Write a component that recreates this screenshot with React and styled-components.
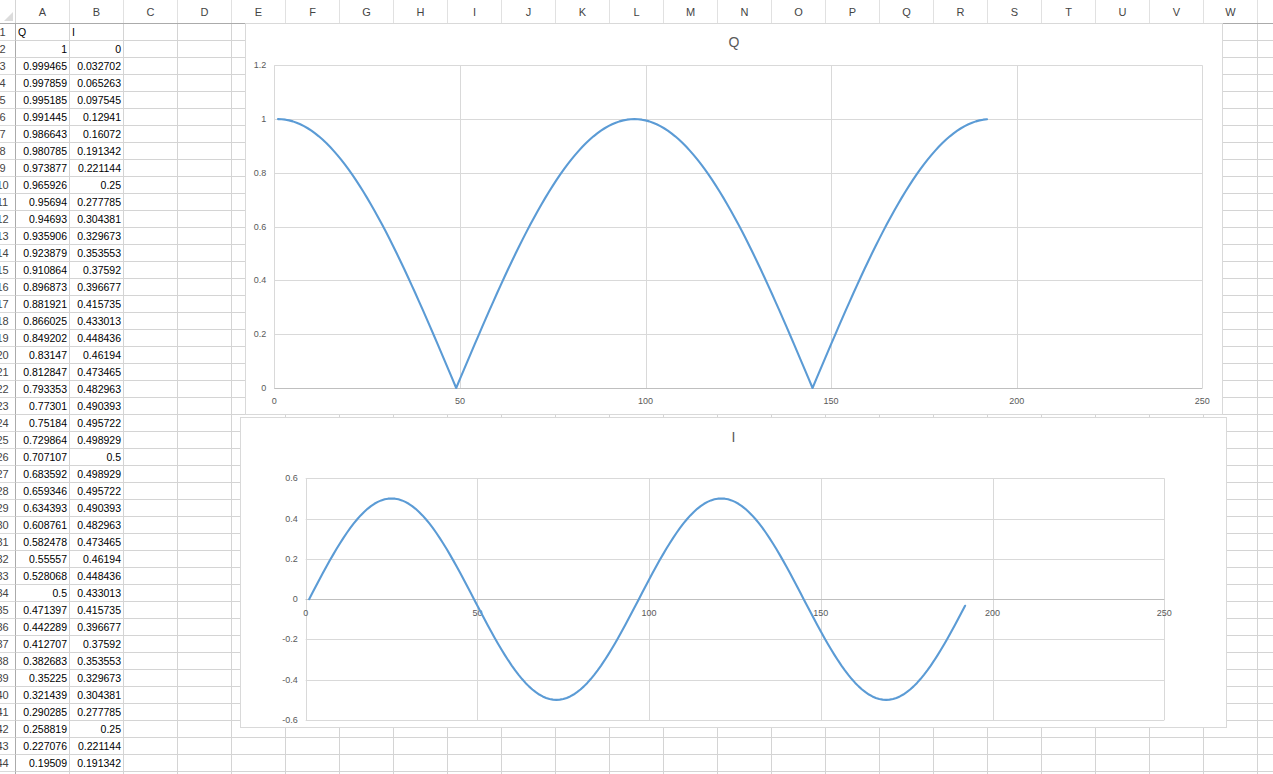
import React from "react";
import styled, { createGlobalStyle } from "styled-components";

const GlobalStyle = createGlobalStyle`
  html, body {
    margin: 0;
    padding: 0;
    background: #fff;
    overflow: hidden;
  }
  body {
    font-family: "Liberation Sans", Arial, sans-serif;
  }
`;

const COLS = "ABCDEFGHIJKLMNOPQRSTUVWX".split("");
const ROW_COUNT = 46;

// values as the sheet shows them (rows 2..44)
const Q_CELLS = [
  "1", "0.999465", "0.997859", "0.995185", "0.991445", "0.986643", "0.980785", "0.973877",
  "0.965926", "0.95694", "0.94693", "0.935906", "0.923879", "0.910864", "0.896873", "0.881921",
  "0.866025", "0.849202", "0.83147", "0.812847", "0.793353", "0.77301", "0.75184", "0.729864",
  "0.707107", "0.683592", "0.659346", "0.634393", "0.608761", "0.582478", "0.55557", "0.528068",
  "0.5", "0.471397", "0.442289", "0.412707", "0.382683", "0.35225", "0.321439", "0.290285",
  "0.258819", "0.227076", "0.19509",
];
const I_CELLS = [
  "0", "0.032702", "0.065263", "0.097545", "0.12941", "0.16072", "0.191342", "0.221144",
  "0.25", "0.277785", "0.304381", "0.329673", "0.353553", "0.37592", "0.396677", "0.415735",
  "0.433013", "0.448436", "0.46194", "0.473465", "0.482963", "0.490393", "0.495722", "0.498929",
  "0.5", "0.498929", "0.495722", "0.490393", "0.482963", "0.473465", "0.46194", "0.448436",
  "0.433013", "0.415735", "0.396677", "0.37592", "0.353553", "0.329673", "0.304381", "0.277785",
  "0.25", "0.221144", "0.191342",
];

// Q = |cos|, I = sin*cos, sampled at pi/96
const qAt = (n) => Math.abs(Math.cos((n * Math.PI) / 96));
const iAt = (n) => 0.5 * Math.sin((n * Math.PI) / 48);

const qSeries = Array.from({ length: 192 }, (_, n) => qAt(n));
const iSeries = Array.from({ length: 192 }, (_, n) => iAt(n));

const Sheet = styled.div`
  position: relative;
  width: 1273px;
  height: 774px;
  overflow: hidden;
  background: #fff;
`;

// the sheet is scrolled a few pixels to the right, cutting the row numbers
const Scroll = styled.div`
  margin-left: -10px;
  width: max-content;
`;

const HeaderRow = styled.div`
  display: flex;
  height: 24px;
  box-sizing: border-box;
  border-bottom: 1px solid #ababab;
`;

const Corner = styled.div`
  flex: none;
  width: 26px;
  box-sizing: border-box;
  border-right: 1px solid #d5d5d5;
  display: flex;
  align-items: flex-end;
  justify-content: flex-end;
  padding: 0 2px 2px 0;
`;

const CornerMark = styled.span`
  width: 0;
  height: 0;
  border-left: 9px solid transparent;
  border-bottom: 9px solid #dcdcdc;
`;

const ColHead = styled.div`
  flex: none;
  width: 54px;
  box-sizing: border-box;
  border-right: 1px solid #e1e1e1;
  text-align: center;
  font-size: 11px;
  line-height: 24px;
  color: #444;
`;

const Row = styled.div`
  display: flex;
  height: 17px;
`;

const RowHead = styled.div`
  flex: none;
  width: 26px;
  box-sizing: border-box;
  border-right: 1px solid #ababab;
  border-bottom: 1px solid #dadada;
  text-align: center;
  font-size: 11px;
  line-height: 17px;
  color: #444;
`;

const Cell = styled.div`
  flex: none;
  width: 54px;
  height: 17px;
  box-sizing: border-box;
  border-right: 1px solid #d4d4d4;
  border-bottom: 1px solid #d4d4d4;
  padding: 1px 2px 0 2px;
  font-size: 10.5px;
  line-height: 15px;
  color: #000;
  white-space: nowrap;
  overflow: hidden;
  text-align: ${(p) => (p.$num ? "right" : "left")};
`;

const ChartFrame = styled.div`
  position: absolute;
  left: ${(p) => p.$x}px;
  top: ${(p) => p.$y}px;
  width: ${(p) => p.$w}px;
  height: ${(p) => p.$h}px;
  box-sizing: border-box;
  border: 1px solid #d9d9d9;
  background: #fff;
  display: flex;
  flex-direction: column;
`;

const ChartTitle = styled.div`
  flex: none;
  height: 30px;
  box-sizing: border-box;
  padding-top: ${(p) => p.$pad}px;
  text-align: center;
  font-size: 14px;
  line-height: 18px;
  color: #595959;
`;

const Plot = styled.svg`
  display: block;
  flex: 1;
  width: 100%;
  font-family: "Liberation Sans", Arial, sans-serif;
  font-size: 9px;
`;

const px = (v) => Math.round(v) + 0.5;

function Chart({ frame, title, titlePad, plot, yMin, yMax, values, labelGap }) {
  const xMax = 250;
  const sx = (v) => plot.x + (v / xMax) * plot.w;
  const sy = (v) => plot.y + ((yMax - v) / (yMax - yMin)) * plot.h;

  const ySteps = Math.round((yMax - yMin) / 0.2);
  const yTicks = Array.from({ length: ySteps + 1 }, (_, i) => Number((yMin + i * 0.2).toFixed(1)));
  const xTicks = [0, 50, 100, 150, 200, 250];

  const path = values
    .map((v, i) => `${i === 0 ? "M" : "L"}${sx(i + 1).toFixed(2)},${sy(v).toFixed(2)}`)
    .join(" ");

  const zeroY = sy(0);

  return (
    <ChartFrame $x={frame.x} $y={frame.y} $w={frame.w} $h={frame.h}>
      <ChartTitle $pad={titlePad}>{title}</ChartTitle>
      <Plot>
        {yTicks.map((t) => (
          <line key={"h" + t} x1={plot.x} x2={plot.x + plot.w} y1={px(sy(t))} y2={px(sy(t))} stroke="#d9d9d9" strokeWidth="1" />
        ))}
        {xTicks.map((t) => (
          <line key={"v" + t} x1={px(sx(t))} x2={px(sx(t))} y1={plot.y} y2={plot.y + plot.h} stroke="#d9d9d9" strokeWidth="1" />
        ))}
        <line x1={plot.x} x2={plot.x + plot.w} y1={px(zeroY)} y2={px(zeroY)} stroke="#bfbfbf" strokeWidth="1" />
        {yTicks.map((t) => (
          <text key={"yl" + t} x={plot.x - 8} y={sy(t) + 3} textAnchor="end" fill="#595959">
            {String(Object.is(t, -0) ? 0 : t)}
          </text>
        ))}
        {xTicks.map((t) => (
          <text key={"xl" + t} x={sx(t)} y={zeroY + labelGap} textAnchor="middle" fill="#595959">
            {t}
          </text>
        ))}
        <path d={path} fill="none" stroke="#5b9bd5" strokeWidth="2.1" strokeLinejoin="round" strokeLinecap="round" />
      </Plot>
    </ChartFrame>
  );
}

function cellText(row, colIndex) {
  if (row === 1) {
    if (colIndex === 0) return { text: "Q", num: false };
    if (colIndex === 1) return { text: "I", num: false };
    return null;
  }
  const n = row - 2;
  if (n >= 0 && n < Q_CELLS.length && colIndex < 2) {
    return { text: colIndex === 0 ? Q_CELLS[n] : I_CELLS[n], num: true };
  }
  return null;
}

export default function App() {
  const rows = Array.from({ length: ROW_COUNT }, (_, i) => i + 1);

  return (
    <Sheet>
      <GlobalStyle />
      <Scroll>
        <HeaderRow>
          <Corner>
            <CornerMark />
          </Corner>
          {COLS.map((c) => (
            <ColHead key={c}>{c}</ColHead>
          ))}
        </HeaderRow>
        {rows.map((r) => (
          <Row key={r}>
            <RowHead>{r}</RowHead>
            {COLS.map((c, ci) => {
              const content = cellText(r, ci);
              return (
                <Cell key={c} $num={content ? content.num : false}>
                  {content ? content.text : ""}
                </Cell>
              );
            })}
          </Row>
        ))}
      </Scroll>

      <Chart
        frame={{ x: 245, y: 23, w: 978, h: 392 }}
        title="Q"
        titlePad={9}
        plot={{ x: 28.3, y: 11.3, w: 928, h: 322.7 }}
        yMin={0}
        yMax={1.2}
        values={qSeries}
        labelGap={16}
      />
      <Chart
        frame={{ x: 240, y: 417, w: 987, h: 311 }}
        title="I"
        titlePad={10}
        plot={{ x: 64.7, y: 30.3, w: 858.6, h: 241.7 }}
        yMin={-0.6}
        yMax={0.6}
        values={iSeries}
        labelGap={17}
      />
    </Sheet>
  );
}
